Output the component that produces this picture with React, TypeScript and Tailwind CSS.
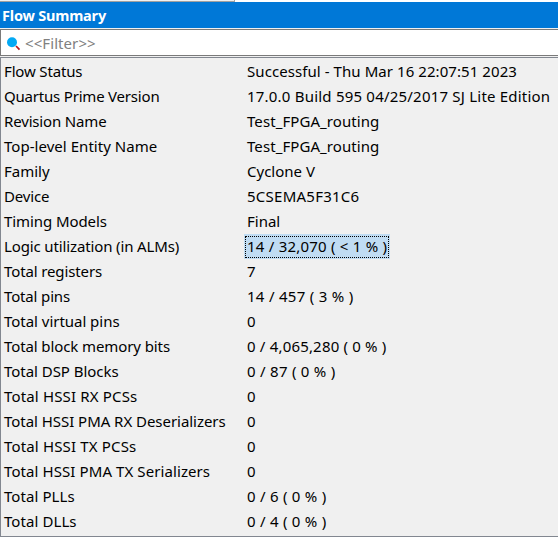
type Row = { label: string; value: string; labelFit?: string; valueFit?: string; selected?: boolean };

const rows: Row[] = [
  { label: 'Flow Status', labelFit: 'tracking-[-0.15px]', value: 'Successful - Thu Mar 16 22:07:51 2023', valueFit: 'tracking-[0.07px]' },
  { label: 'Quartus Prime Version', labelFit: 'tracking-[-0.2px]', value: '17.0.0 Build 595 04/25/2017 SJ Lite Edition', valueFit: 'tracking-[0.21px]' },
  { label: 'Revision Name', labelFit: 'tracking-[-0.16px]', value: 'Test_FPGA_routing', valueFit: 'tracking-[0.08px]' },
  { label: 'Top-level Entity Name', labelFit: 'tracking-[0.04px]', value: 'Test_FPGA_routing', valueFit: 'tracking-[0.08px]' },
  { label: 'Family', value: 'Cyclone V' },
  { label: 'Device', labelFit: 'tracking-[-0.15px]', value: '5CSEMA5F31C6', valueFit: 'tracking-[0.25px]' },
  { label: 'Timing Models', labelFit: 'tracking-[-0.08px]', value: 'Final' },
  { label: 'Logic utilization (in ALMs)', labelFit: 'tracking-[-0.13px]', value: '14 / 32,070 ( < 1 % )', valueFit: 'tracking-[0.22px]', selected: true },
  { label: 'Total registers', labelFit: 'tracking-[-0.12px]', value: '7' },
  { label: 'Total pins', labelFit: 'tracking-[-0.15px]', value: '14 / 457 ( 3 % )', valueFit: 'tracking-[0.28px]' },
  { label: 'Total virtual pins', labelFit: 'tracking-[-0.03px]', value: '0' },
  { label: 'Total block memory bits', labelFit: 'tracking-[-0.1px]', value: '0 / 4,065,280 ( 0 % )', valueFit: 'tracking-[0.18px]' },
  { label: 'Total DSP Blocks', labelFit: 'tracking-[-0.04px]', value: '0 / 87 ( 0 % )', valueFit: 'tracking-[0.27px]' },
  { label: 'Total HSSI RX PCSs', labelFit: 'tracking-[0.16px]', value: '0' },
  { label: 'Total HSSI PMA RX Deserializers', labelFit: 'tracking-[-0.04px]', value: '0' },
  { label: 'Total HSSI TX PCSs', labelFit: 'tracking-[0.16px]', value: '0' },
  { label: 'Total HSSI PMA TX Serializers', labelFit: 'tracking-[0.09px]', value: '0' },
  { label: 'Total PLLs', labelFit: 'tracking-[0.08px]', value: '0 / 6 ( 0 % )', valueFit: 'tracking-[0.25px]' },
  { label: 'Total DLLs', labelFit: 'tracking-[0.08px]', value: '0 / 4 ( 0 % )', valueFit: 'tracking-[0.25px]' },
];

export default function App() {
  return (
    <div className="flex h-[537px] w-[558px] flex-col overflow-hidden bg-[#f0f0f0] font-['Noto_Sans',sans-serif] text-[15px] whitespace-pre text-black">
      <div className="flex h-0.5 shrink-0 bg-white">
        <div className="w-[235px] border-r border-b border-[#a0a0a0] bg-[#f0f0f0]" />
      </div>
      <header className="flex h-[26px] shrink-0 items-center bg-[#0078d7] pt-0.5 pl-0.5 text-[14.5px] font-bold tracking-[-0.2px] text-white">Flow Summary</header>
      <div className="mt-px flex h-[27px] shrink-0 items-center border-y border-l border-[#7a7a7a] bg-white pl-1.5 text-[#808080]">
        <svg width="14" height="14" viewBox="0 0 14 14" className="mt-0.5 mr-1">
          <path d="M9 9l3.5 3.6" stroke="#b5151b" strokeWidth="1.7" />
          <circle cx="5" cy="5.2" r="5" fill="#03a9f4" />
        </svg>
        <span className="pt-px tracking-[0.08px]">&lt;&lt;Filter&gt;&gt;</span>
      </div>
      <main className="mt-px flex h-[480px] shrink-0 flex-col border-y border-l border-[#828790] pt-px">
        {rows.map((row) => (
          <div key={row.label} className="flex h-[25px] shrink-0 items-center pl-[3px]">
            <span className={`w-60 ${row.labelFit ?? ''}`}>{row.label}</span>
            {row.selected ? (
              <span className={`flex h-[25px] items-center bg-[#c0dcf3] p-px ${row.valueFit ?? ''}`}>
                <span className="flex h-[22px] w-36 items-center border border-dotted border-black pl-px">{row.value}</span>
              </span>
            ) : (
              <span className={`pl-[3px] ${row.valueFit ?? ''}`}>{row.value}</span>
            )}
          </div>
        ))}
      </main>
    </div>
  );
}
